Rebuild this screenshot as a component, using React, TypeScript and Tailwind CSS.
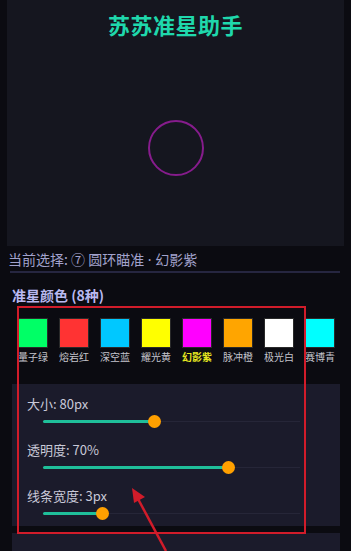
import React from "react";

const colores = [
  { nombre: "量子绿", hex: "#00ff66" },
  { nombre: "熔岩红", hex: "#ff3333" },
  { nombre: "深空蓝", hex: "#00c8ff" },
  { nombre: "耀光黄", hex: "#ffff00" },
  { nombre: "幻影紫", hex: "#ff00ff", activo: true },
  { nombre: "脉冲橙", hex: "#ffa500" },
  { nombre: "极光白", hex: "#ffffff" },
  { nombre: "赛博青", hex: "#00ffff" },
];

const sliders = [
  { label: "大小: 80px", pct: 43 },
  { label: "透明度: 70%", pct: 72 },
  { label: "线条宽度: 3px", pct: 23 },
];

function Slider({ label, pct }: { label: string; pct: number }) {
  return (
    <div className="flex flex-col">
      <span className="text-[13px] leading-[16px] text-[#c9c9d8] pl-[15px]">{label}</span>
      <div className="relative ml-[31px] mr-[40px] h-[14px] mt-[3px] flex items-center">
        <div className="absolute inset-x-0 h-px bg-[#262638]" />
        <div className="absolute left-0 h-[3px] rounded-full bg-[#1fbf9a]" style={{ width: `${pct}%` }} />
        <div
          className="absolute w-[13px] h-[13px] -ml-[6px] rounded-full bg-[#ffa000]"
          style={{ left: `${pct}%` }}
        />
      </div>
    </div>
  );
}

export default function App() {
  return (
    <div
      className="relative w-[351px] h-[551px] overflow-hidden bg-[#0b0b11] flex flex-col"
      style={{ fontFamily: '"Noto Sans CJK SC", "Noto Sans", sans-serif' }}
    >
      {/* Vista previa */}
      <div className="mx-[7px] h-[246px] shrink-0 bg-[#15161f] flex flex-col items-center">
        <h1 className="mt-[9px] text-[22px] leading-[30px] font-bold text-[#1fd8ac] tracking-[0.5px]">
          苏苏准星助手
        </h1>
        <div className="mt-[81px] w-[56px] h-[56px] rounded-full border-2 border-[#861c8c]" />
      </div>

      <div className="px-[8px] mt-[4px] text-[14px] leading-[18px] text-[#a2a2cc] whitespace-nowrap">
        当前选择: ⑦ 圆环瞄准
        <span className="font-['Noto_Sans',sans-serif]"> · </span>
        幻影紫
      </div>
      <div className="mx-[10px] mr-[11px] mt-[2px] h-[2px] bg-[#262640]" />

      <div className="px-[12px] mt-[13px] text-[14px] leading-[18px] font-bold text-[#b9b9f0]">
        准星颜色 (8种)
      </div>

      {/* Colores */}
      <div className="flex gap-[11px] pl-[18px] mt-[14px]">
        {colores.map((c) => (
          <div key={c.nombre} className="w-[30px] flex flex-col items-center shrink-0">
            <div className="w-[30px] h-[30px] border border-[#2a2a2a]" style={{ backgroundColor: c.hex }} />
            <span
              className={`mt-[2px] text-[10px] leading-[13px] whitespace-nowrap ${
                c.activo ? "text-[#e6e620] font-bold" : "text-[#c4c4cc]"
              }`}
            >
              {c.nombre}
            </span>
          </div>
        ))}
      </div>

      {/* Ajustes */}
      <div className="mx-[12px] mr-[11px] mt-[21px] h-[158px] bg-[#1b1b2b] flex flex-col gap-[13px] pt-[12px]">
        {sliders.map((s) => (
          <Slider key={s.label} label={s.label} pct={s.pct} />
        ))}
      </div>
      <div className="mx-[12px] mr-[11px] mt-[7px] h-[20px] bg-[#1b1b2b]" />

      {/* Anotación */}
      <div className="absolute left-[17px] top-[306px] w-[289px] h-[228px] border-2 border-[#d11c2a] pointer-events-none" />
      <svg className="absolute left-0 top-0 pointer-events-none" width="351" height="551">
        <line x1="166" y1="551" x2="137" y2="497" stroke="#d11c2a" strokeWidth="2.5" />
        <polygon points="132,488 145,497 134,503" fill="#d11c2a" />
      </svg>
    </div>
  );
}
